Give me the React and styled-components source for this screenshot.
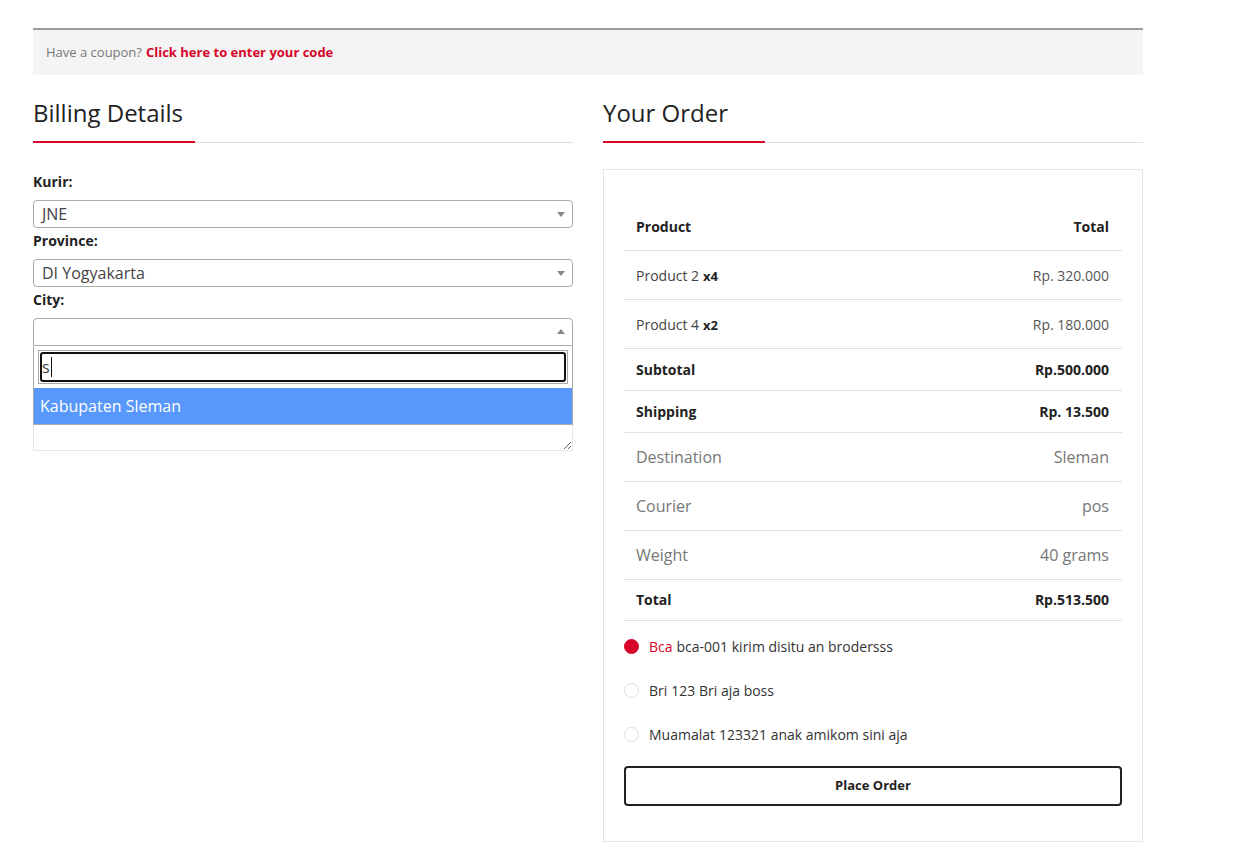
import React from "react";
import styled, { createGlobalStyle } from "styled-components";

const RED = "#d8052a";

const Global = createGlobalStyle`
  html, body { margin: 0; padding: 0; background: #fff; }
  body { font-family: "Open Sans", "Liberation Sans", sans-serif; color: #333; }
  * { box-sizing: border-box; }
`;

const Page = styled.div`
  width: 1110px;
  margin: 28px 0 0 33px;
  padding-bottom: 9px;
`;

const Coupon = styled.div`
  border-top: 2px solid #9a9a9a;
  background: #f4f4f4;
  height: 47px;
  padding: 0 13px 2px;
  display: flex;
  align-items: center;
  font-size: 13px;
  color: #777;
`;

const CouponLink = styled.a`
  color: ${RED};
  font-weight: 700;
  text-decoration: none;
  margin-left: 4px;
`;

const Columns = styled.div`
  display: grid;
  grid-template-columns: 540px 540px;
  column-gap: 30px;
  margin-top: 23px;
  align-items: start;
`;

const Column = styled.div`
  display: flex;
  flex-direction: column;
`;

const Heading = styled.h3`
  margin: 0;
  font-size: 24px;
  line-height: 29px;
  font-weight: 400;
  color: #222;
`;

const Underline = styled.div`
  display: flex;
  align-items: flex-end;
  height: 2px;
  margin-top: 14px;
`;

const RedBar = styled.div`
  width: 162px;
  height: 2px;
  background: ${RED};
`;

const GreyBar = styled.div`
  flex: 1;
  height: 1px;
  background: #dedede;
`;

const Form = styled.div`
  margin-top: 27px;
  display: flex;
  flex-direction: column;
`;

const Label = styled.label`
  display: block;
  font-size: 14px;
  line-height: 24px;
  font-weight: 700;
  color: #222;
  margin-bottom: 6px;
`;

const SelectWrap = styled.div`
  position: relative;
`;

const SelectBox = styled.div`
  height: 28px;
  margin-bottom: 1px;
  border: 1px solid #aaa;
  border-radius: ${(p) => (p.$open ? "4px 4px 0 0" : "4px")};
  background: #fff;
  display: flex;
  align-items: center;
  padding: 0 20px 0 8px;
  font-size: 16px;
  color: #444;
  position: relative;
`;

const Arrow = styled.span`
  position: absolute;
  right: 7px;
  top: 50%;
  width: 0;
  height: 0;
  border-left: 4px solid transparent;
  border-right: 4px solid transparent;
  ${(p) =>
    p.$up
      ? `border-bottom: 5px solid #888; margin-top: -3px;`
      : `border-top: 5px solid #888; margin-top: -2px;`}
`;

const Dropdown = styled.div`
  position: absolute;
  left: 0;
  right: 0;
  top: 28px;
  background: #fff;
  border: 1px solid #aaa;
  border-top: none;
  z-index: 5;
`;

const SearchArea = styled.div`
  padding: 4px;
`;

const SearchField = styled.div`
  border: 1px solid #aaa;
  padding: 1px;
`;

const SearchInput = styled.div`
  height: 30px;
  border: 2px solid #111;
  border-radius: 3px;
  display: flex;
  align-items: center;
  padding-left: 0;
  font-size: 16px;
  color: #444;
`;

const Caret = styled.span`
  display: inline-block;
  width: 1px;
  height: 20px;
  background: #111;
  margin-left: 1px;
`;

const Option = styled.div`
  background: #5897fb;
  color: #fff;
  font-size: 16px;
  line-height: 24px;
  padding: 6px;
`;

const TextArea = styled.textarea`
  margin-top: 6px;
  height: 98px;
  width: 100%;
  border: 1px solid #e3e9f1;
  border-radius: 0;
  font-family: inherit;
  display: block;
  outline: none;
`;

const OrderBox = styled.div`
  margin-top: 26px;
  border: 1px solid #e5e5e5;
  padding: 34px 20px 35px;
`;

const Row = styled.div`
  display: flex;
  justify-content: space-between;
  align-items: center;
  height: ${(p) => p.$h}px;
  padding: ${(p) => (p.$bold ? "0 13px 1px 12px" : "0 13px 0 12px")};
  border-bottom: 1px solid #e1e1e1;
  box-sizing: content-box;
  font-size: ${(p) => (p.$detail ? 16 : 14)}px;
  font-weight: ${(p) => (p.$bold ? 700 : 400)};
  color: ${(p) => (p.$detail ? "#777" : p.$bold ? "#222" : "#444")};
`;

const Qty = styled.b`
  font-weight: 700;
  font-size: 13px;
  color: #222;
  margin-left: 4px;
`;

const Price = styled.span`
  color: ${(p) => (p.$muted ? "#555" : "inherit")};
`;

const Payments = styled.div`
  margin-top: 3px;
  display: flex;
  flex-direction: column;
`;

const PayRow = styled.label`
  display: flex;
  align-items: center;
  height: 44px;
  gap: 10px;
  font-size: 14px;
  color: #333;
`;

const Radio = styled.span`
  width: 15px;
  height: 15px;
  border-radius: 50%;
  flex: none;
  background: ${(p) => (p.$checked ? RED : "#fff")};
  border: 1px solid ${(p) => (p.$checked ? RED : "#ddd")};
`;

const Bank = styled.span`
  color: ${(p) => (p.$active ? RED : "inherit")};
  margin-right: 4px;
`;

const PlaceOrder = styled.button`
  margin-top: 10px;
  width: 100%;
  height: 40px;
  padding: 0 0 3px;
  border: 2px solid #222;
  border-radius: 4px;
  background: #fff;
  font-family: inherit;
  font-size: 13px;
  font-weight: 700;
  color: #222;
  cursor: pointer;
`;

const rows = [
  { k: "head", h: 45, bold: true, l: "Product", r: "Total" },
  { k: "p2", h: 48, l: "Product 2", q: "x4", r: "Rp. 320.000", muted: true },
  { k: "p4", h: 48, l: "Product 4", q: "x2", r: "Rp. 180.000", muted: true },
  { k: "sub", h: 40, bold: true, l: "Subtotal", r: "Rp.500.000" },
  { k: "ship", h: 40, bold: true, l: "Shipping", r: "Rp. 13.500" },
  { k: "dest", h: 48, detail: true, l: "Destination", r: "Sleman" },
  { k: "cour", h: 48, detail: true, l: "Courier", r: "pos" },
  { k: "wt", h: 48, detail: true, l: "Weight", r: "40 grams" },
  { k: "tot", h: 39, bold: true, l: "Total", r: "Rp.513.500" },
];

const payments = [
  { bank: "Bca", text: "bca-001 kirim disitu an brodersss", checked: true },
  { bank: "Bri", text: "123 Bri aja boss" },
  { bank: "Muamalat", text: "123321 anak amikom sini aja" },
];

export default function App() {
  return (
    <>
      <Global />
      <Page>
        <Coupon>
          Have a coupon?<CouponLink href="#">Click here to enter your code</CouponLink>
        </Coupon>
        <Columns>
          <Column>
            <Heading>Billing Details</Heading>
            <Underline>
              <RedBar />
              <GreyBar />
            </Underline>
            <Form>
              <Label>Kurir:</Label>
              <SelectBox>
                JNE
                <Arrow />
              </SelectBox>
              <Label>Province:</Label>
              <SelectBox>
                DI Yogyakarta
                <Arrow />
              </SelectBox>
              <Label>City:</Label>
              <SelectWrap>
                <SelectBox $open>
                  <Arrow $up />
                </SelectBox>
                <Dropdown>
                  <SearchArea>
                    <SearchField>
                      <SearchInput>
                        s<Caret />
                      </SearchInput>
                    </SearchField>
                  </SearchArea>
                  <Option>Kabupaten Sleman</Option>
                </Dropdown>
              </SelectWrap>
              <TextArea />
            </Form>
          </Column>
          <Column>
            <Heading>Your Order</Heading>
            <Underline>
              <RedBar />
              <GreyBar />
            </Underline>
            <OrderBox>
              {rows.map((r) => (
                <Row key={r.k} $h={r.h} $bold={r.bold} $detail={r.detail}>
                  <span>
                    {r.l}
                    {r.q && <Qty>{r.q}</Qty>}
                  </span>
                  <Price $muted={r.muted}>{r.r}</Price>
                </Row>
              ))}
              <Payments>
                {payments.map((p) => (
                  <PayRow key={p.bank}>
                    <Radio $checked={p.checked} />
                    <span>
                      <Bank $active={p.checked}>{p.bank}</Bank>
                      {p.text}
                    </span>
                  </PayRow>
                ))}
              </Payments>
              <PlaceOrder>Place Order</PlaceOrder>
            </OrderBox>
          </Column>
        </Columns>
      </Page>
    </>
  );
}
